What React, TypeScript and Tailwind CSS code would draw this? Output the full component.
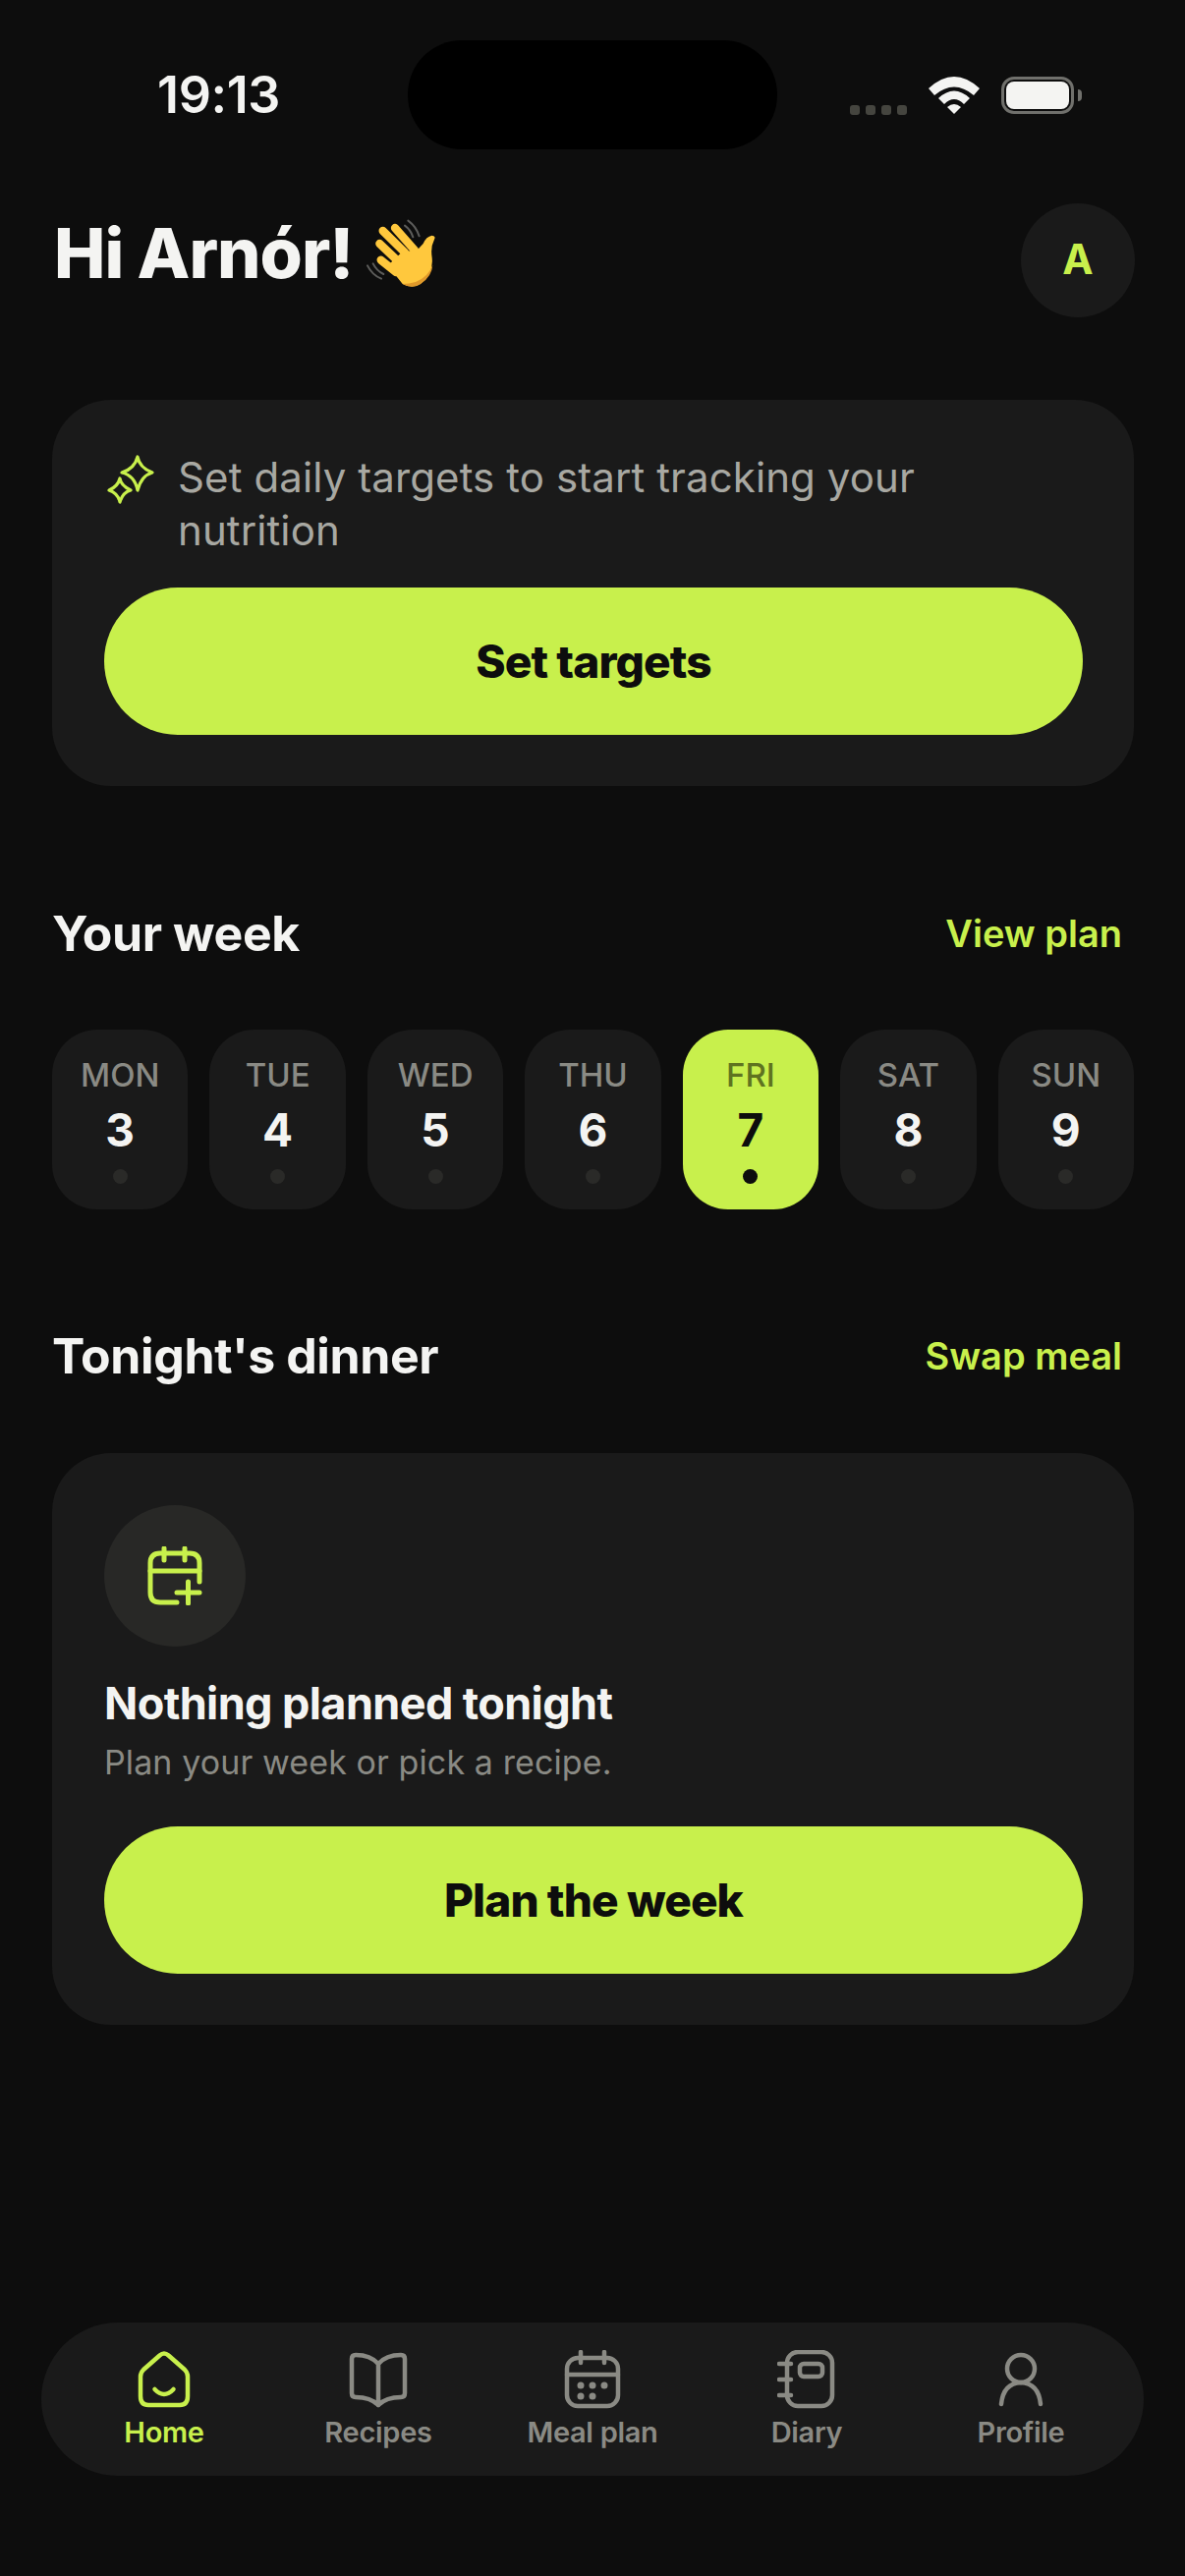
const lime = "#c8f04c";

function Wave() {
  return (
    <svg width="70" height="70" viewBox="105 130 210 210" fill="none">
      <g stroke="#5c5c5a" strokeWidth="6" strokeLinecap="round">
        <path d="M222 150 Q240 163 247 185" />
        <path d="M232 135 Q256 152 266 182" />
        <path d="M108 272 Q122 300 150 312" />
        <path d="M125 266 Q136 288 157 298" />
      </g>
      <g stroke="#ffc83d" strokeLinecap="round">
        <path d="M155 166 L222 232" strokeWidth="25" />
        <path d="M192 157 L252 225" strokeWidth="25" />
        <path d="M145 205 L205 262" strokeWidth="25" />
        <path d="M149 255 L195 292" strokeWidth="25" />
      </g>
      <path d="M170 272 L212 232 L262 222 L278 205 Q287 183 305 180 Q318 182 312 192 Q300 215 305 248 Q310 300 270 328 Q245 345 215 328 Z" fill="#ffc83d" />
      <path d="M215 328 Q245 345 270 328 Q305 305 307 270 Q295 305 255 322 Q235 328 215 328Z" fill="#e0992a" />
    </svg>
  );
}

function Sparkles() {
  return (
    <svg width="50" height="50" viewBox="0 0 50 50" fill="none" stroke={lime} strokeWidth="3.2" strokeLinejoin="round">
      <path d="M32 2 Q34 13 47 18 Q36 21 32 36 Q29 21 16 18 Q29 14 32 2Z" />
      <path d="M14 24 Q15 31 25 36 Q17 38 14 48 Q12 39 3 36 Q12 32 14 24Z" />
    </svg>
  );
}

function Home() {
  return (
    <svg width="60" height="60" viewBox="0 0 60 60" fill="none" stroke={lime} strokeWidth="4.5" strokeLinecap="round" strokeLinejoin="round">
      <path d="M25.5 5.5 L9 20 Q6 23 6 27 V47 Q6 56 14 56 H46 Q54 56 54 47 V27 Q54 23 51 20 L34.5 5.5 Q30 1.5 25.5 5.5Z" />
      <path d="M20.5 40 Q30 50 39.5 40" />
    </svg>
  );
}

function Book() {
  return (
    <svg width="60" height="60" viewBox="0 0 60 60" fill="none" stroke="#8a8a84" strokeWidth="4.5" strokeLinecap="round" strokeLinejoin="round">
      <path d="M30 14 Q22 5 7 5 Q3 5 3 9 V44 Q3 48 7 48 Q22 48 30 56 Q38 48 53 48 Q57 48 57 44 V9 Q57 5 53 5 Q38 5 30 14Z" />
      <path d="M30 14 V56" />
    </svg>
  );
}

function Meal() {
  return (
    <svg width="60" height="60" viewBox="0 0 60 60" fill="none" stroke="#8a8a84" strokeWidth="4.5" strokeLinecap="round" strokeLinejoin="round">
      <rect x="4" y="8" width="52" height="49" rx="11" />
      <path d="M4 25 H56 M18 2 V13 M42 2 V13" />
      <g fill="#8a8a84" stroke="none">
        <circle cx="18" cy="36" r="3.5" />
        <circle cx="30" cy="36" r="3.5" />
        <circle cx="42" cy="36" r="3.5" />
        <circle cx="18" cy="47" r="3.5" />
        <circle cx="30" cy="47" r="3.5" />
      </g>
    </svg>
  );
}

function Diary() {
  return (
    <svg width="60" height="60" viewBox="0 0 60 60" fill="none" stroke="#8a8a84" strokeWidth="4.5" strokeLinecap="round" strokeLinejoin="round">
      <rect x="10" y="2" width="46" height="55" rx="11" />
      <rect x="23" y="14" width="23" height="13" rx="4" />
      <path d="M2 14 H14 M2 30 H14 M2 46 H14" />
    </svg>
  );
}

function Profile() {
  return (
    <svg width="60" height="60" viewBox="0 0 60 60" fill="none" stroke="#8a8a84" strokeWidth="4.5" strokeLinecap="round" strokeLinejoin="round">
      <circle cx="30" cy="19" r="14" />
      <path d="M10 55 Q12 34 30 33 Q48 34 50 55" />
    </svg>
  );
}

function CalendarPlus() {
  return (
    <svg width="56" height="60" viewBox="0 0 56 60" fill="none" stroke={lime} strokeWidth="5" strokeLinecap="round" strokeLinejoin="round">
      <path d="M53 36 V17 Q53 7 43 7 H13 Q3 7 3 17 V47 Q3 57 13 57 H30" />
      <path d="M3 25 H53 M17 2 V14 M38 2 V14 M41.5 36 V58 M30 47 H53" />
    </svg>
  );
}

function Wifi() {
  return (
    <svg width="52" height="38" viewBox="0 0 52 38" fill="#f4f4f2">
      <path d="M0 12 Q26 -12 52 12 L46 19 Q26 2 6 19Z" />
      <path d="M10 22 Q26 7 42 22 L36 28 Q26 18 16 28Z" />
      <path d="M19 31 Q26 25 33 31 L26 38Z" />
    </svg>
  );
}

function PrimaryButton({ label }: { label: string }) {
  return (
    <button className="flex h-[150px] w-full items-center justify-center rounded-full bg-[#c8f04c] text-[46px] font-extrabold tracking-[-0.9px] text-[#0d0d0d]">
      {label}
    </button>
  );
}

function SectionHeader({ title, action }: { title: string; action: string }) {
  return (
    <div className="flex h-[60px] items-center justify-between pr-[12px]">
      <h2 className="text-[50px] font-bold tracking-[-0.4px] text-[#f4f4f2]">{title}</h2>
      <span className="text-[38px] font-semibold tracking-[0px] text-[#c8f04c]">{action}</span>
    </div>
  );
}

const days = [
  ["MON", "3"],
  ["TUE", "4"],
  ["WED", "5"],
  ["THU", "6"],
  ["FRI", "7"],
  ["SAT", "8"],
  ["SUN", "9"],
];

const tabs = [
  { label: "Home", icon: <Home />, active: true },
  { label: "Recipes", icon: <Book /> },
  { label: "Meal plan", icon: <Meal /> },
  { label: "Diary", icon: <Diary /> },
  { label: "Profile", icon: <Profile /> },
];

export default function App() {
  return (
    <div className="flex h-[2622px] w-[1206px] flex-col bg-[#0d0d0d] font-['Inter',sans-serif]">
      <div className="grid grid-cols-[415px_376px_415px] pt-[41px]">
        <div className="flex items-center justify-center pl-[30px] text-[52px] font-semibold leading-none tracking-[-0.4px] text-[#f4f4f2]">
          19:13
        </div>
        <div className="h-[111px] rounded-[55px] bg-black" />
        <div className="flex items-center pl-[74px]">
          <div className="mt-[30px] flex gap-[6px]">
            <div className="h-[10px] w-[10px] rounded-[3px] bg-[#45453f]" />
            <div className="h-[10px] w-[10px] rounded-[3px] bg-[#45453f]" />
            <div className="h-[10px] w-[10px] rounded-[3px] bg-[#45453f]" />
            <div className="h-[10px] w-[10px] rounded-[3px] bg-[#45453f]" />
          </div>
          <div className="ml-[22px] flex">
            <Wifi />
          </div>
          <div className="ml-[22px] flex h-[38px] w-[74px] items-center justify-center rounded-[13px] border-[3px] border-[#70706c]">
            <div className="h-[28px] w-[64px] rounded-[8px] bg-[#f4f4f2]" />
          </div>
          <div className="ml-[4px] h-[12px] w-[4px] rounded-r-full bg-[#70706c]" />
        </div>
      </div>

      <div className="mt-[55px] flex items-center justify-between pl-[55px] pr-[51px]">
        <div className="flex items-center gap-[14px] pb-[14px]">
          <h1 className="text-[70px] font-extrabold leading-none tracking-[-1px] text-[#f4f4f2]">Hi Arnór!</h1>
          <Wave />
        </div>
        <div className="flex h-[116px] w-[116px] items-center justify-center rounded-full bg-[#1a1a1a] pb-[3px] text-[42px] font-bold text-[#c8f04c]">
          A
        </div>
      </div>

      <div className="ml-[53px] mr-[52px] mt-[84px] rounded-[60px] bg-[#1a1a1a] p-[52px] pl-[53px]">
        <div className="flex gap-[23px]">
          <div className="ml-[2px] mt-[4px] shrink-0">
            <Sparkles />
          </div>
          <p className="max-w-[800px] text-[42px] leading-[54px] tracking-[0.1px] text-[#a8a8a2]">
            Set daily targets to start tracking your nutrition
          </p>
        </div>
        <div className="mt-[31px]">
          <PrimaryButton label="Set targets" />
        </div>
      </div>

      <div className="ml-[53px] mr-[52px] mt-[120px]">
        <SectionHeader title="Your week" action="View plan" />
      </div>

      <div className="ml-[53px] mr-[52px] mt-[68px] grid grid-cols-7 gap-[22px]">
        {days.map(([d, n]) => {
          const on = d === "FRI";
          return (
            <div
              key={d}
              className={`flex h-[183px] flex-col items-center rounded-[46px] pt-[27px] ${on ? "bg-[#c8f04c]" : "bg-[#1a1a1a]"}`}
            >
              <span className={`text-[33px] font-medium leading-[38px] ${on ? "text-[#5f7320]" : "text-[#8a8a84]"}`}>{d}</span>
              <span className={`mt-[9px] text-[46px] font-bold leading-[56px] ${on ? "text-[#0d0d0d]" : "text-[#f4f4f2]"}`}>{n}</span>
              <span className={`mt-[12px] h-[15px] w-[15px] rounded-full ${on ? "bg-[#0d0d0d]" : "bg-[#2a2a28]"}`} />
            </div>
          );
        })}
      </div>

      <div className="ml-[53px] mr-[52px] mt-[119px]">
        <SectionHeader title="Tonight's dinner" action="Swap meal" />
      </div>

      <div className="ml-[53px] mr-[52px] mt-[69px] rounded-[60px] bg-[#1a1a1a] p-[52px] pl-[53px] pt-[53px]">
        <div className="flex h-[144px] w-[144px] items-center justify-center rounded-full bg-[#282826]">
          <CalendarPlus />
        </div>
        <h3 className="mt-[30px] text-[45px] font-bold leading-[56px] tracking-[-0.6px] text-[#f4f4f2]">Nothing planned tonight</h3>
        <p className="mt-[8px] text-[34px] leading-[48px] tracking-[0.1px] text-[#8a8a84]">Plan your week or pick a recipe.</p>
        <div className="mt-[41px]">
          <PrimaryButton label="Plan the week" />
        </div>
      </div>

      <nav className="mx-[42px] mb-[102px] mt-auto grid h-[156px] grid-cols-5 rounded-full bg-[#1a1a1a] px-[16px] pt-[28px]">
        {tabs.map((t) => (
          <div key={t.label} className="flex flex-col items-center">
            {t.icon}
            <span className={`mt-[5px] whitespace-nowrap text-[29px] font-semibold leading-[38px] tracking-[-0.3px] ${t.active ? "text-[#c8f04c]" : "text-[#8a8a84]"}`}>
              {t.label}
            </span>
          </div>
        ))}
      </nav>
    </div>
  );
}
